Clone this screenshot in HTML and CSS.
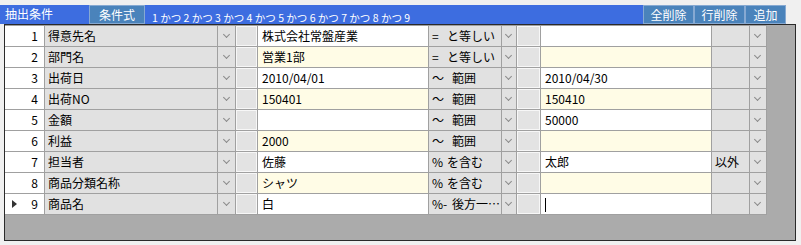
FILE: index.html
```html
<!DOCTYPE html>
<html>
<head>
<meta charset="utf-8">
<title>抽出条件</title>
<link rel="stylesheet" href="styles.css">
</head>
<body>
<div class="panel">
 <div class="bar">
  <span class="title">抽出条件</span>
  <span class="btn cond">条件式</span>
  <span class="expr">1 かつ 2 かつ 3 かつ 4 かつ 5 かつ 6 かつ 7 かつ 8 かつ 9</span>
  <span class="btn act">全削除</span>
  <span class="btn act">行削除</span>
  <span class="btn act add">追加</span>
 </div>
 <div class="grid">
  <div class="rows">
   <div class="row">
    <div class="hdr">1</div>
    <div class="combo">得意先名</div><div class="drop"></div>
    <div class="check"></div>
    <div class="val">株式会社常盤産業</div>
    <div class="combo op"><span class="sym eq">=</span>と等しい</div><div class="drop"></div>
    <div class="check"></div>
    <div class="val"></div>
    <div class="combo"></div><div class="drop"></div>
   </div>
   <div class="row even">
    <div class="hdr">2</div>
    <div class="combo">部門名</div><div class="drop"></div>
    <div class="check"></div>
    <div class="val">営業1部</div>
    <div class="combo op"><span class="sym eq">=</span>と等しい</div><div class="drop"></div>
    <div class="check"></div>
    <div class="val"></div>
    <div class="combo"></div><div class="drop"></div>
   </div>
   <div class="row">
    <div class="hdr">3</div>
    <div class="combo">出荷日</div><div class="drop"></div>
    <div class="check"></div>
    <div class="val">2010/04/01</div>
    <div class="combo op"><span class="sym range">～</span>範囲</div><div class="drop"></div>
    <div class="check"></div>
    <div class="val">2010/04/30</div>
    <div class="combo"></div><div class="drop"></div>
   </div>
   <div class="row even">
    <div class="hdr">4</div>
    <div class="combo">出荷NO</div><div class="drop"></div>
    <div class="check"></div>
    <div class="val">150401</div>
    <div class="combo op"><span class="sym range">～</span>範囲</div><div class="drop"></div>
    <div class="check"></div>
    <div class="val">150410</div>
    <div class="combo"></div><div class="drop"></div>
   </div>
   <div class="row">
    <div class="hdr">5</div>
    <div class="combo">金額</div><div class="drop"></div>
    <div class="check"></div>
    <div class="val"></div>
    <div class="combo op"><span class="sym range">～</span>範囲</div><div class="drop"></div>
    <div class="check"></div>
    <div class="val">50000</div>
    <div class="combo"></div><div class="drop"></div>
   </div>
   <div class="row even">
    <div class="hdr">6</div>
    <div class="combo">利益</div><div class="drop"></div>
    <div class="check"></div>
    <div class="val">2000</div>
    <div class="combo op"><span class="sym range">～</span>範囲</div><div class="drop"></div>
    <div class="check"></div>
    <div class="val"></div>
    <div class="combo"></div><div class="drop"></div>
   </div>
   <div class="row">
    <div class="hdr">7</div>
    <div class="combo">担当者</div><div class="drop"></div>
    <div class="check"></div>
    <div class="val">佐藤</div>
    <div class="combo op"><span class="sym like">%</span>を含む</div><div class="drop"></div>
    <div class="check"></div>
    <div class="val">太郎</div>
    <div class="combo">以外</div><div class="drop"></div>
   </div>
   <div class="row even">
    <div class="hdr">8</div>
    <div class="combo">商品分類名称</div><div class="drop"></div>
    <div class="check"></div>
    <div class="val">シャツ</div>
    <div class="combo op"><span class="sym like">%</span>を含む</div><div class="drop"></div>
    <div class="check"></div>
    <div class="val"></div>
    <div class="combo"></div><div class="drop"></div>
   </div>
   <div class="row">
    <div class="hdr current">9</div>
    <div class="combo">商品名</div><div class="drop"></div>
    <div class="check"></div>
    <div class="val">白</div>
    <div class="combo op"><span class="sym ends">%-</span>後方一…</div><div class="drop"></div>
    <div class="check"></div>
    <div class="val"><span class="caret"></span></div>
    <div class="combo"></div><div class="drop"></div>
   </div>
  </div>
 </div>
</div>
</body>
</html>
```
FILE: styles.css
```css
body {
 margin:0;
 background-color:#f0f0f0;
 color:black;
 font-family:"Noto Sans CJK JP","Liberation Sans",sans-serif;
 font-size:12px;
}
.panel {
 padding-top:5px;
}
.bar {
 display:flex;
 width:786px;
 height:19px;
 background-color:#3d6de0;
 color:white;
 line-height:18px;
}
.title {
 width:84px;
 padding-left:5px;
}
.btn {
 box-sizing:border-box;
 background-color:#4a83bb;
 border:1px solid #86a9d2;
 text-align:center;
}
.cond {
 width:56px;
}
.expr {
 flex:1;
 padding-left:7px;
 font-size:10.5px;
 line-height:12px;
 align-self:flex-end;
 white-space:nowrap;
}
.act {
 width:51px;
}
.add {
 width:41px;
}
.grid {
 box-sizing:border-box;
 margin-left:4px;
 width:792px;
 height:217px;
 border:1px solid #2a2a2a;
 background-color:#ababab;
}
.rows {
 width:762px;
 background-color:#a0a0a0;
 padding:1px 0;
 display:flex;
 flex-direction:column;
 gap:1px;
}
.row {
 display:grid;
 grid-template-columns:39px 172px 17px 21px 170px 72px 14px 23px 170px 37px 16px;
 column-gap:1px;
 height:20px;
 line-height:20px;
}
.row > div {
 white-space:nowrap;
 overflow:hidden;
}
.hdr {
 position:relative;
 background-color:white;
 text-align:right;
 padding-right:6px;
}
.current::before {
 content:"";
 position:absolute;
 left:7px;
 top:6px;
 border-left:5px solid #333;
 border-top:4px solid transparent;
 border-bottom:4px solid transparent;
}
.combo {
 background-color:#e1e1e1;
 padding-left:3px;
}
.sym {
 display:inline-block;
}
.eq {
 width:15px;
}
.range {
 width:20px;
}
.like {
 width:15px;
}
.ends {
 width:20px;
}
.drop {
 position:relative;
 background-color:#e1e1e1;
}
.drop::after {
 content:"";
 position:absolute;
 left:50%;
 top:6px;
 width:4px;
 height:4px;
 margin-left:-3px;
 border-right:1px solid #8a8a8a;
 border-bottom:1px solid #8a8a8a;
 transform:rotate(45deg);
}
.check {
 background-color:#e3e3e3;
 box-shadow:inset 0 0 0 1px #f7f7f7;
}
.val {
 background-color:white;
 padding-left:4px;
}
.even .val {
 background-color:#fffce6;
}
.caret {
 display:inline-block;
 width:1px;
 height:14px;
 background-color:black;
 vertical-align:-3px;
}
```
